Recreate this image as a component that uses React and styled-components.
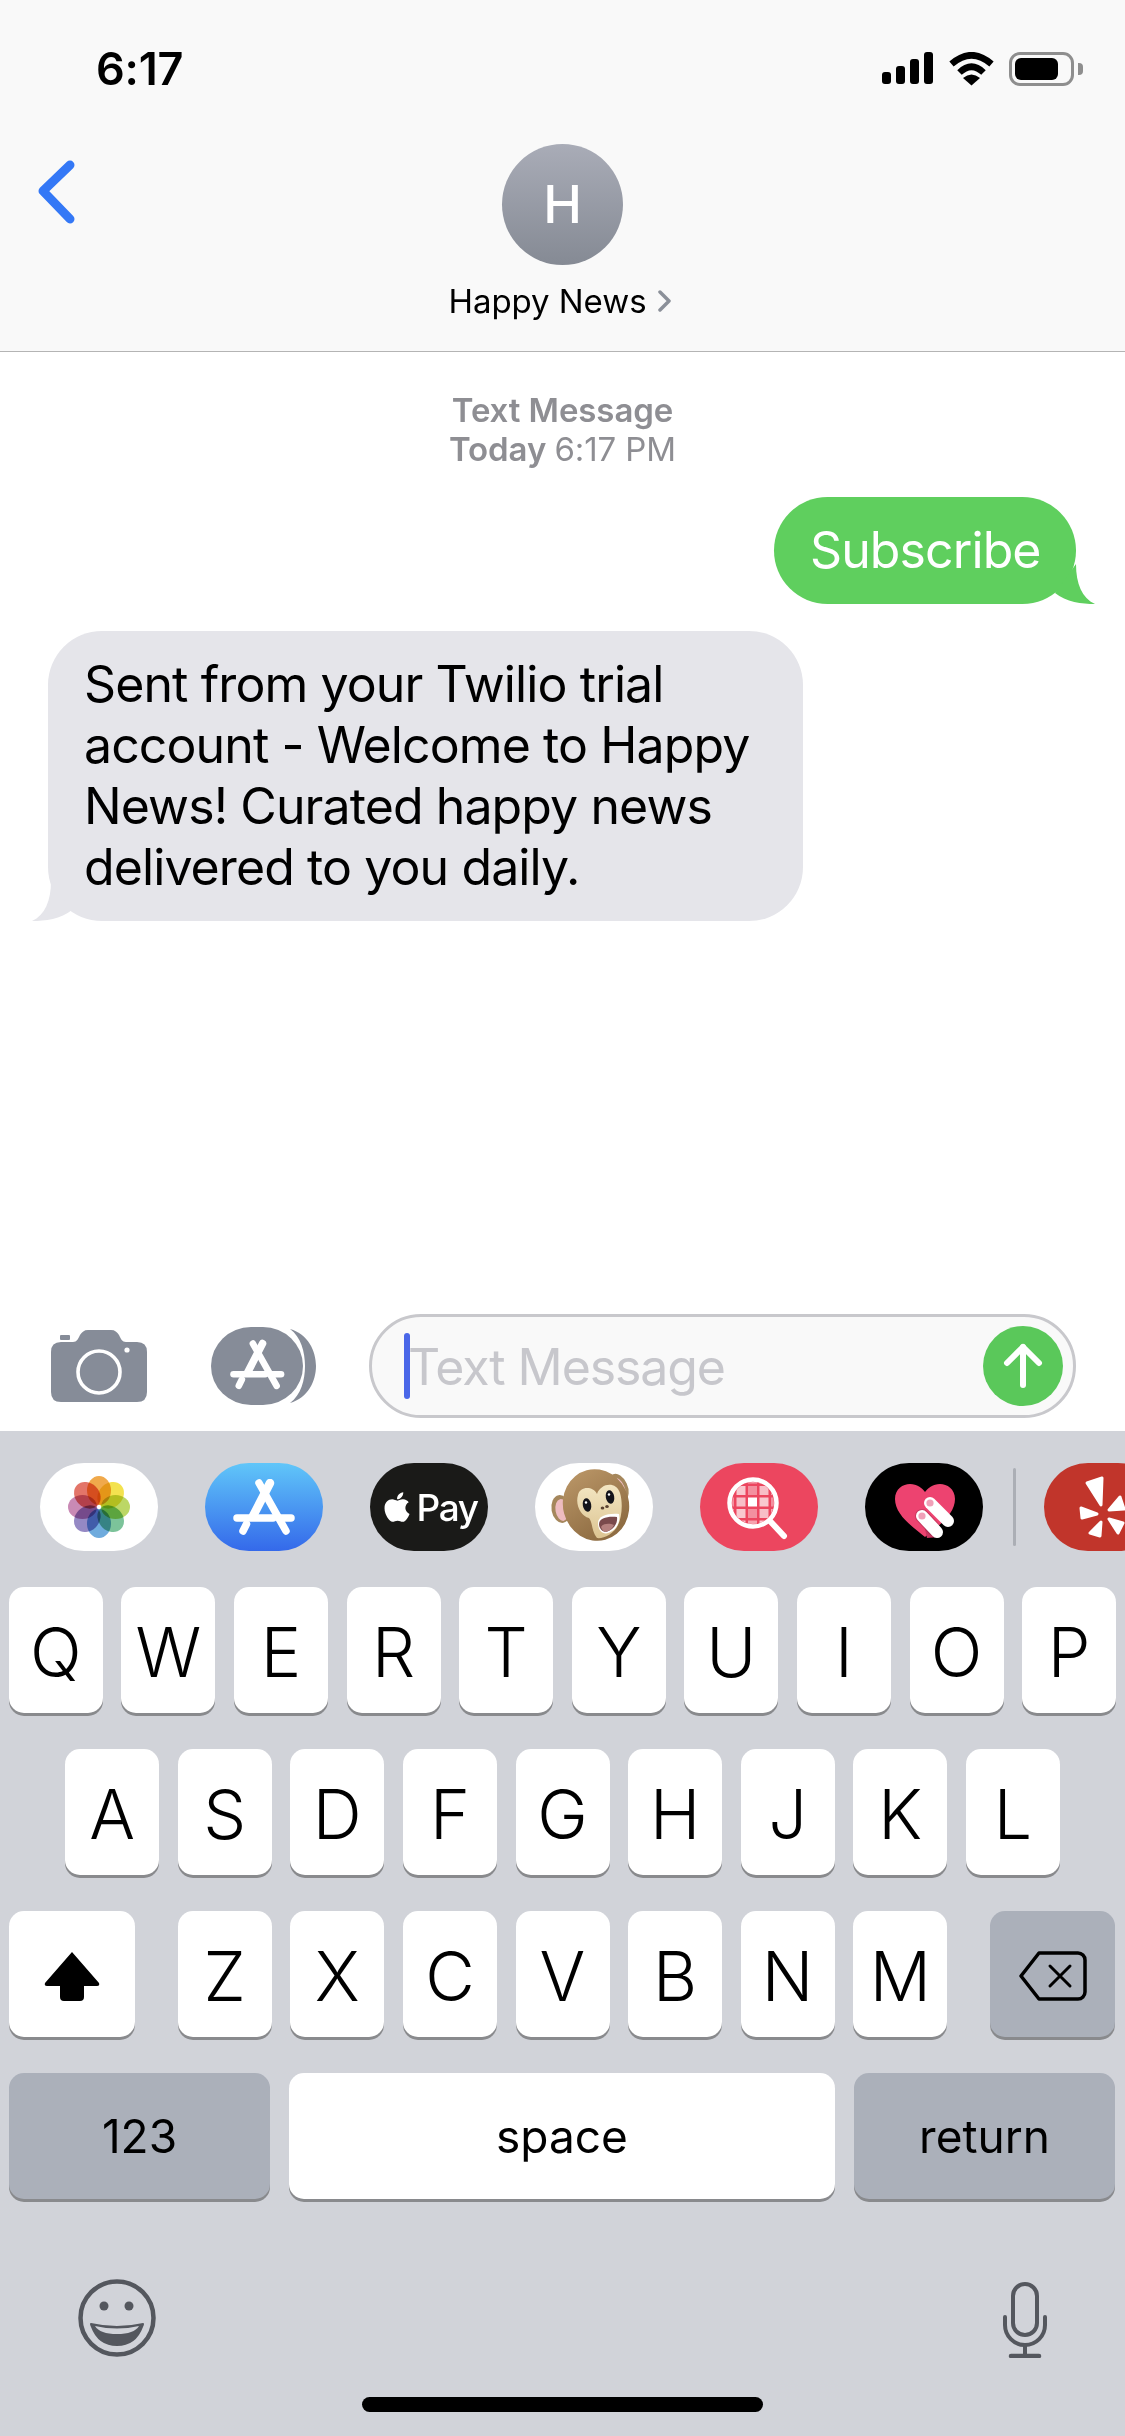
import React from "react";
import styled, { createGlobalStyle } from "styled-components";
import { FaApple } from "react-icons/fa";

const Global = createGlobalStyle`
  html, body { margin: 0; padding: 0; background: #fff; }
  * { box-sizing: border-box; }
`;

const Page = styled.div`
  width: 1125px; height: 2436px; display: flex; flex-direction: column;
  font-family: Inter, "Liberation Sans", sans-serif; color: #000; overflow: hidden; background: #fff;
`;
const Header = styled.header`
  height: 352px; flex: none; background: #f9f9f9; border-bottom: 1.5px solid #b4b4b4;
`;
const StatusBar = styled.div`
  height: 144px; display: flex; justify-content: space-between; align-items: flex-start;
  padding: 52px 43px 0 96px;
`;
const Time = styled.div`
  font-size: 45px; line-height: 34px; font-weight: 600; letter-spacing: -0.2px;
`;
const StatusIcons = styled.div`
  display: flex; align-items: flex-start; gap: 15.5px;
`;
const Battery = styled.div`
  position: relative; width: 65px; height: 34px; border: 3px solid #8e8e8e; border-radius: 11px; padding: 3px;
  margin-right: 8px;
  &::after {
    content: ""; position: absolute; left: 66px; top: 8px; width: 5px; height: 12px;
    background: #8e8e8e; border-radius: 0 4px 4px 0;
  }
`;
const BatteryFill = styled.div`
  width: 43px; height: 22px; background: #000; border-radius: 6px;
`;
const Nav = styled.div`
  display: grid; grid-template-columns: 1fr auto 1fr;
`;
const BackButton = styled.div`
  padding: 12px 0 0 34px;
`;
const Contact = styled.div`
  display: flex; flex-direction: column; align-items: center;
`;
const Avatar = styled.div`
  width: 121px; height: 121px; border-radius: 50%; display: flex; align-items: center; justify-content: center;
  background: linear-gradient(#a9acb7, #858a94); color: #fff; font-size: 52px; font-weight: 500;
`;
const NameRow = styled.div`
  display: flex; align-items: center; gap: 10px; margin: 16px 5px 0 0; font-size: 33px; line-height: 40px; letter-spacing: -0.05px;
`;

const Conversation = styled.main`
  flex: 1; display: flex; flex-direction: column; padding-top: 39px;
`;
const Stamp = styled.div`
  text-align: center; font-size: 33px; line-height: 39px; color: #8e8e93; font-weight: 600; letter-spacing: -0.1px;
`;
const StampTime = styled.span`
  font-weight: 400;
`;
const Bubble = styled.div`
  position: relative; font-size: 50px; line-height: 61px; border-radius: 54px; white-space: nowrap;
  padding: 23px 36px; letter-spacing: -0.9px;
  align-self: ${p => (p.$mine ? "flex-end" : "flex-start")};
  background: ${p => (p.$mine ? "#5fcf5e" : "#e5e5ea")};
  color: ${p => (p.$mine ? "#fff" : "#000")};
  margin: ${p => (p.$mine ? "28px 49px 0 0" : "27px 0 0 48px")};
  width: ${p => (p.$mine ? "302px" : "755px")};
`;
const TailSvg = styled.svg`
  position: absolute; bottom: 0; width: 61px; height: 50px;
  ${p => (p.$mine ? "right: -19px;" : "left: -16px; transform: scaleX(-1);")}
`;

const Composer = styled.div`
  flex: none; display: flex; align-items: center; padding: 0 48px 13px 51px;
`;
const ComposerIcons = styled.div`
  display: flex; align-items: center; gap: 64px; margin-right: 53px;
`;
const InputBox = styled.div`
  width: 707px; height: 104px; border: 3px solid #c8c8cc; border-radius: 52px; background: #f9f9f9;
  display: flex; align-items: center; padding: 0 10px 0 32px;
`;
const Caret = styled.div`
  width: 6px; height: 66px; border-radius: 3px; background: #4a67e8; flex: none;
`;
const Placeholder = styled.div`
  font-size: 50px; color: #c7c7cc; letter-spacing: -1.1px; flex: 1; margin: 1px 0 0 -2px;
`;
const SendButton = styled.div`
  width: 80px; height: 80px; border-radius: 50%; background: #5ac85a; display: flex; align-items: center; justify-content: center; flex: none;
`;

const Keyboard = styled.section`
  flex: none; height: 1005px; background: #d1d3d9; position: relative;
`;
const AppRow = styled.div`
  display: flex; align-items: center; gap: 47px; padding: 32px 0 0 40px; overflow: hidden; height: 120px;
`;
const AppPill = styled.div`
  flex: none; width: 118px; height: 88px; border-radius: 44px; display: flex; align-items: center; justify-content: center;
  background: ${p => p.$bg};
`;
const ApplePay = styled.div`
  display: flex; align-items: center; gap: 2px; color: #fff; font-size: 37px; font-weight: 500; letter-spacing: -1.4px;
`;
const Divider = styled.div`
  flex: none; width: 3px; height: 78px; background: #abaeb5; border-radius: 2px; margin: 0 -19px 0 -17px;
`;
const Keys = styled.div`
  display: flex; flex-direction: column; gap: 36px; padding-top: 36px;
`;
const Row = styled.div`
  display: flex; justify-content: center; gap: 18.6px;
`;
const SplitRow = styled.div`
  display: flex; justify-content: space-between; padding: 0 10px 0 9px;
`;
const Key = styled.div`
  width: ${p => p.$w || 94}px; height: 126px; flex: none; border-radius: 15px;
  display: flex; align-items: center; justify-content: center;
  padding-top: ${p => (p.$size ? 0 : 3)}px;
  background: ${p => (p.$dark ? "#abb0ba" : "#fff")};
  box-shadow: 0 3px 0 #898a8d;
  font-size: ${p => p.$size || 68}px; font-weight: 300; line-height: 1;
`;
const LabelKey = styled(Key)`
  font-weight: 400;
`;
const BottomBar = styled.div`
  display: flex; justify-content: space-between; align-items: flex-start; padding: 80px 78px 0 78px;
`;
const MicSlot = styled.div`
  margin-top: 3px;
`;
const HomeBar = styled.div`
  position: absolute; left: 362px; top: 966px; width: 401px; height: 15px; background: #000; border-radius: 8px;
`;

function AppGlyphInner() {
  return (
    <g fill="none" stroke="#fff" strokeWidth="7.5" strokeLinecap="round">
      <path d="M26 4 L53 52" />
      <path d="M37 4 L20 37" strokeWidth="8.5" />
      <path d="M4 39 H40" />
      <path d="M46 39 H58" />
      <path d="M13.5 45 L10 52" />
    </g>
  );
}
const AppGlyph = () => (
  <svg width="62" height="56" viewBox="0 0 62 56"><AppGlyphInner /></svg>
);

const PetalGroup = styled.g`
  isolation: isolate;
  ellipse { mix-blend-mode: multiply; }
`;
const petals = ["#f0a94b", "#f3e24f", "#bcd766", "#7cc39a", "#6fabdd", "#9589c4", "#c98ab5", "#e37569"];
const Photos = () => (
  <svg width="62" height="62" viewBox="-31 -31 62 62">
    <PetalGroup>
      {petals.map((c, i) => (
        <ellipse key={c} cx="0" cy="-16.5" rx="12" ry="14.5" fill={c} transform={`rotate(${i * 45})`} />
      ))}
    </PetalGroup>
    <circle r="1.8" fill="#fff" />
  </svg>
);

const Monkey = () => (
  <svg width="117" height="88" viewBox="5 8 117 88">
    <defs>
      <linearGradient id="fur" x1="0" y1="0" x2="0.3" y2="1">
        <stop offset="0" stopColor="#bb9768" />
        <stop offset="1" stopColor="#8f6d43" />
      </linearGradient>
      <linearGradient id="cream" x1="0" y1="0" x2="0" y2="1">
        <stop offset="0" stopColor="#f3e6c2" />
        <stop offset="1" stopColor="#dcc492" />
      </linearGradient>
    </defs>
    <ellipse cx="30" cy="54" rx="9.5" ry="14" fill="#a5875c" transform="rotate(-10 30 54)" />
    <ellipse cx="31" cy="55" rx="6.5" ry="11" fill="#eebcc0" transform="rotate(-10 31 55)" />
    <ellipse cx="88" cy="32" rx="8.5" ry="14" fill="#a5875c" transform="rotate(-25 88 32)" />
    <ellipse cx="88" cy="33" rx="5.5" ry="11" fill="#eebcc0" transform="rotate(-25 88 33)" />
    <ellipse cx="65" cy="50" rx="33" ry="36" fill="url(#fur)" transform="rotate(-15 65 50)" />
    <path
      d="M47 40 C49 31 62 31 66 39 C70 28 85 26 89 38 C92 48 91 62 87 70 C83 79 72 84 66 83 C60 75 62 68 58 63 C50 61 44 50 47 40Z"
      fill="url(#cream)"
    />
    <ellipse cx="56" cy="50" rx="4.2" ry="6.8" fill="#14141a" transform="rotate(-10 56 50)" />
    <ellipse cx="79" cy="42" rx="4.2" ry="6.8" fill="#14141a" transform="rotate(-10 79 42)" />
    <circle cx="55" cy="47.5" r="1.2" fill="#fff" />
    <circle cx="78" cy="39.5" r="1.2" fill="#fff" />
    <ellipse cx="71.5" cy="53" rx="1.8" ry="1.6" fill="#5c4330" />
    <ellipse cx="76" cy="51.5" rx="1.8" ry="1.6" fill="#5c4330" />
    <path d="M67 68 C67 61 77 58 88 59 C90 68 84 77 75 78.5 C70 78.5 67 74 67 68Z" fill="#fff" />
    <path d="M68 69 C68 63 77 61 86 62 C87 69 82 75 75 77 C71 77 68 73 68 69Z" fill="#7a4a4c" />
    <path d="M70 72 C72 68 79 68 83 70 C81 74 78 76 75 77 C73 77 71 75 70 72Z" fill="#b4807e" />
  </svg>
);

const tileOpacity = [0.4, 0.65, 0.5, 0.7];
const Finder = () => (
  <svg width="118" height="88" viewBox="0 0 118 88">
    <defs>
      <clipPath id="lens"><circle cx="53" cy="40" r="21" /></clipPath>
    </defs>
    <g clipPath="url(#lens)">
      {[0, 1, 2, 3, 4].flatMap(r =>
        [0, 1, 2, 3, 4].map(c => (
          <rect
            key={`${r}-${c}`}
            x={25 + c * 11.5}
            y={11.5 + r * 11.5}
            width="9"
            height="9"
            fill="#fff"
            opacity={r === 2 && c === 2 ? 1 : tileOpacity[(r * 2 + c) % 4]}
          />
        ))
      )}
    </g>
    <circle cx="53" cy="40" r="23.5" fill="none" stroke="#fff" strokeWidth="4.5" />
    <path d="M70 58 L84 73" stroke="#fff" strokeWidth="6" strokeLinecap="round" />
  </svg>
);

const HeartFingers = () => (
  <svg width="118" height="88" viewBox="0 0 118 88">
    <path d="M60 74 C48 64 30 52 30 36 C30 26 38 21 45 21 C52 21 57 25 60 29 C63 25 68 21 75 21 C82 21 90 26 90 36 C90 52 72 64 60 74Z" fill="#ed4370" />
    <path d="M58 57 L74 74 L62 75 Z" fill="#c93560" />
    <path d="M65 40 L83 58" stroke="#fff" strokeWidth="12" strokeLinecap="round" />
    <path d="M57 53 L70 67" stroke="#000" strokeOpacity="0.15" strokeWidth="14" strokeLinecap="round" />
    <path d="M57 53 L72 69" stroke="#fff" strokeWidth="12" strokeLinecap="round" />
    <circle cx="65" cy="40" r="3.6" fill="#f0a0b8" />
    <circle cx="57" cy="53" r="3.6" fill="#f0a0b8" />
  </svg>
);

const Yelp = () => (
  <svg width="118" height="88" viewBox="0 0 118 88" fill="#fff" stroke="#fff" strokeWidth="3" strokeLinejoin="round">
    <polygon points="43,20 58,15 57,42" />
    <polygon points="37,45 53,51 38,55" />
    <polygon points="46,70 57,59 56,73" />
    <polygon points="65,47 76,34 80,46" />
    <polygon points="65,56 79,60 74,70" />
  </svg>
);

const Camera = () => (
  <svg width="96" height="72" viewBox="0 0 96 72">
    <rect x="9" y="5" width="10" height="5" rx="1" fill="#868c98" />
    <path d="M0 22 Q0 12 10 12 H22 C26 12 27 9 29 5 C31 2 33 0 37 0 H60 C64 0 66 2 68 5 C70 9 71 12 75 12 H86 Q96 12 96 22 V62 Q96 72 86 72 H10 Q0 72 0 62Z" fill="#868c98" />
    <circle cx="48" cy="42" r="21" fill="none" stroke="#fff" strokeWidth="3.6" />
    <circle cx="76" cy="20" r="2.6" fill="#fff" />
  </svg>
);

const AppDrawer = () => (
  <svg width="105" height="78" viewBox="0 0 105 78">
    <rect x="0" y="0" width="92" height="78" rx="40" ry="39" fill="#868c98" />
    <path d="M79 2 C97 7 105 24 105 39 C105 54 97 71 79 76 C90 68 94 53 94 39 C94 25 90 10 79 2Z" fill="#868c98" />
    <g transform="translate(19 13) scale(0.88)"><AppGlyphInner /></g>
  </svg>
);

const Tail = ({ mine, color }) => (
  <TailSvg $mine={mine} viewBox="0 0 61 50">
    <path d="M42 10 C42 30 48 44 61 50 C48 50 32 48 21 39 Z" fill={color} />
  </TailSvg>
);

const rows = [
  "QWERTYUIOP".split(""),
  "ASDFGHJKL".split(""),
  "ZXCVBNM".split(""),
];

export default function App() {
  return (
    <Page>
      <Global />
      <Header>
        <StatusBar>
          <Time>6:17</Time>
          <StatusIcons>
            <svg width="51" height="32" viewBox="0 0 51 32" fill="#000">
              <rect x="0" y="20" width="9" height="12" rx="3" />
              <rect x="14" y="14" width="9" height="18" rx="3" />
              <rect x="28" y="7" width="9" height="25" rx="3" />
              <rect x="42" y="0" width="9" height="32" rx="3" />
            </svg>
            <svg width="45" height="34" viewBox="0 0 45 34">
              <path d="M2.5 12 Q22.5 -5.5 42.5 12" fill="none" stroke="#000" strokeWidth="6.5" />
              <path d="M10.5 20.5 Q22.5 9 34.5 20.5" fill="none" stroke="#000" strokeWidth="6.5" />
              <path d="M14 26 Q22.5 19 31 26 L22.5 33.5 Z" fill="#000" />
            </svg>
            <Battery><BatteryFill /></Battery>
          </StatusIcons>
        </StatusBar>
        <Nav>
          <BackButton>
            <svg width="44" height="72" viewBox="0 0 44 72" fill="none">
              <path d="M36 9 L9 35 L36 63" stroke="#3478f6" strokeWidth="9" strokeLinecap="round" strokeLinejoin="round" />
            </svg>
          </BackButton>
          <Contact>
            <Avatar>H</Avatar>
            <NameRow>
              Happy News
              <svg width="15" height="22" viewBox="0 0 15 22" fill="none">
                <path d="M3 2 L12 11 L3 20" stroke="#8b9099" strokeWidth="3.5" strokeLinecap="round" strokeLinejoin="round" />
              </svg>
            </NameRow>
          </Contact>
          <div />
        </Nav>
      </Header>

      <Conversation>
        <Stamp>
          Text Message<br />
          Today <StampTime>6:17 PM</StampTime>
        </Stamp>
        <Bubble $mine>
          Subscribe
          <Tail mine color="#5fcf5e" />
        </Bubble>
        <Bubble>
          Sent from your Twilio trial<br />
          account - Welcome to Happy<br />
          News! Curated happy news<br />
          delivered to you daily.
          <Tail color="#e5e5ea" />
        </Bubble>
      </Conversation>

      <Composer>
        <ComposerIcons>
          <Camera />
          <AppDrawer />
        </ComposerIcons>
        <InputBox>
          <Caret />
          <Placeholder>Text Message</Placeholder>
          <SendButton>
            <svg width="40" height="46" viewBox="0 0 40 46" fill="none" stroke="#fff" strokeWidth="6" strokeLinecap="round" strokeLinejoin="round">
              <path d="M20 4 V42" />
              <path d="M4 20 L20 4 L36 20" />
            </svg>
          </SendButton>
        </InputBox>
      </Composer>

      <Keyboard>
        <AppRow>
          <AppPill $bg="#fff"><Photos /></AppPill>
          <AppPill $bg="linear-gradient(#60c6f9, #3469ea)"><AppGlyph /></AppPill>
          <AppPill $bg="#1a1a18">
            <ApplePay><FaApple size={34} />Pay</ApplePay>
          </AppPill>
          <AppPill $bg="#fff"><Monkey /></AppPill>
          <AppPill $bg="#ec465f"><Finder /></AppPill>
          <AppPill $bg="#000"><HeartFingers /></AppPill>
          <Divider />
          <AppPill $bg="#c1352b"><Yelp /></AppPill>
        </AppRow>
        <Keys>
          <Row>{rows[0].map(k => <Key key={k}>{k}</Key>)}</Row>
          <Row>{rows[1].map(k => <Key key={k}>{k}</Key>)}</Row>
          <SplitRow>
            <Key $w={126}>
              <svg width="56" height="50" viewBox="0 0 56 50">
                <path d="M28 1 L55 32 Q56 35 53 35 H40 V46 Q40 50 36 50 H20 Q16 50 16 46 V35 H3 Q0 35 1 32 Z" fill="#000" />
              </svg>
            </Key>
            <Row>{rows[2].map(k => <Key key={k}>{k}</Key>)}</Row>
            <Key $w={125} $dark>
              <svg width="68" height="50" viewBox="0 0 68 50" fill="none" stroke="#000" strokeWidth="3.5" strokeLinejoin="round" strokeLinecap="round">
                <path d="M20 2 H59 a7 7 0 0 1 7 7 V41 a7 7 0 0 1 -7 7 H20 L2 25 Z" />
                <path d="M31 15 L51 35 M51 15 L31 35" strokeWidth="3" />
              </svg>
            </Key>
          </SplitRow>
          <SplitRow>
            <LabelKey $w={261} $dark $size={46}>123</LabelKey>
            <LabelKey $w={546} $size={46}>space</LabelKey>
            <LabelKey $w={261} $dark $size={46}>return</LabelKey>
          </SplitRow>
        </Keys>
        <BottomBar>
          <svg width="78" height="78" viewBox="0 0 78 78">
            <circle cx="39" cy="39" r="36.5" fill="none" stroke="#54575e" strokeWidth="4.5" />
            <circle cx="26" cy="27" r="4.5" fill="#54575e" />
            <circle cx="51" cy="27" r="4.5" fill="#54575e" />
            <path d="M13 44 Q39 50 65 44 Q67 44 65 48 Q58 67 39 67 Q20 67 13 48 Q11 44 13 44Z" fill="#54575e" />
            <path d="M17 47 Q39 52 61 47 Q56 55 39 55 Q22 55 17 47Z" fill="#d1d3d9" />
          </svg>
          <MicSlot>
            <svg width="44" height="76" viewBox="0 0 44 76" fill="none" stroke="#54575e" strokeWidth="4">
              <rect x="10" y="2" width="24" height="51" rx="12" />
              <path d="M2 35 V43 A20 20 0 0 0 42 43 V35" strokeLinecap="round" />
              <path d="M22 63 V74" />
              <path d="M8 74 H36" strokeWidth="4.5" strokeLinecap="round" />
            </svg>
          </MicSlot>
        </BottomBar>
        <HomeBar />
      </Keyboard>
    </Page>
  );
}
